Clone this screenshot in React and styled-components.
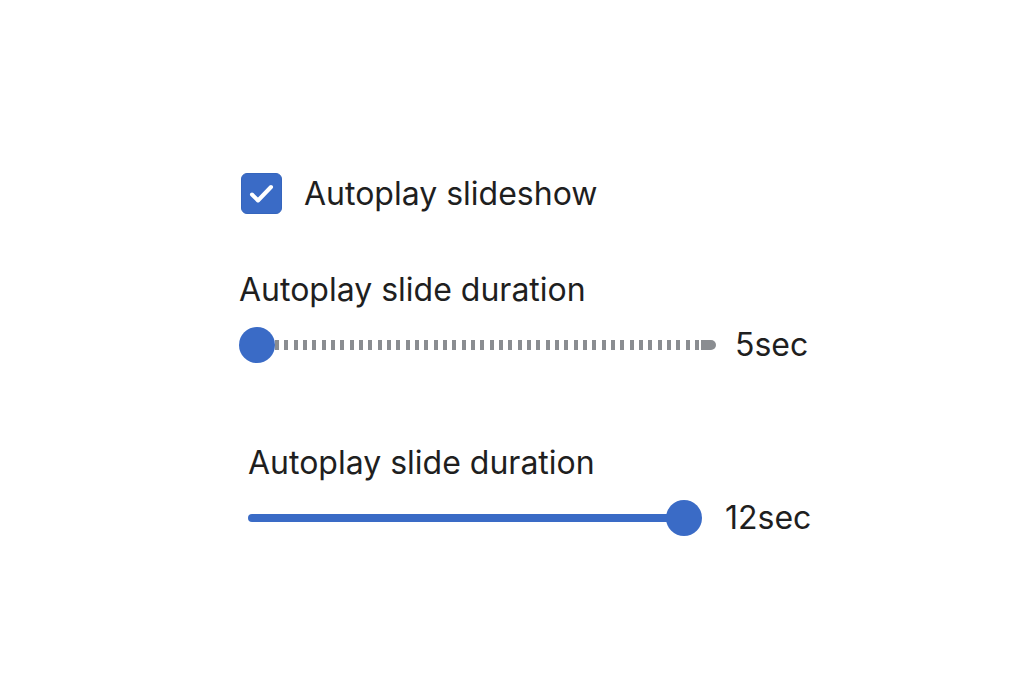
import React from "react"
import styled, { createGlobalStyle } from "styled-components"

const GlobalStyle = createGlobalStyle`
    html, body {
        margin: 0;
        padding: 0;
        background: #ffffff;
    }
    body {
        font-family: Inter, "Noto Sans", "Liberation Sans", sans-serif;
        color: #1f1f1f;
        -webkit-font-smoothing: antialiased;
    }
`

const ACCENT = "#3a6bc6"

const Page = styled.div`
    width: 1030px;
    height: 687px;
    box-sizing: border-box;
    padding: 173px 0 0 239px;
    display: flex;
    flex-direction: column;
`

const CheckRow = styled.label`
    display: flex;
    align-items: center;
    gap: 22px;
    height: 41px;
    margin-left: 2px;
    font-size: 32px;
    cursor: pointer;
`

const Box = styled.span`
    width: 41px;
    height: 41px;
    box-sizing: border-box;
    border-radius: 6px;
    background: ${p => (p.$checked ? ACCENT : "#fff")};
    border: 1px solid ${p => (p.$checked ? "#3565bd" : "#8a8d91")};
    display: flex;
    align-items: center;
    justify-content: center;
    position: relative;
    & > svg {
        position: absolute;
        left: -1px;
        top: -1px;
    }
`

const Group = styled.div`
    display: flex;
    flex-direction: column;
    margin-top: ${p => p.$top}px;
    padding-left: ${p => p.$indent || 0}px;
`

const Label = styled.div`
    font-size: 32px;
    line-height: 36px;
    height: 36px;
`

const SliderRow = styled.div`
    display: flex;
    align-items: center;
    height: 36px;
    margin-top: 19px;
    gap: ${p => p.$gap}px;
`

const Rail = styled.div`
    position: relative;
    width: ${p => p.$width}px;
    height: 36px;
`

const DashedTrack = styled.div`
    position: absolute;
    left: 36px;
    right: 15px;
    top: 13px;
    height: 10px;
    background: repeating-linear-gradient(
        to right,
        #8a8d91 0 4px,
        transparent 4px 9.33px
    );
    &::after {
        content: "";
        position: absolute;
        left: 100%;
        top: 0;
        width: 15px;
        height: 10px;
        background: #8a8d91;
        border-radius: 0 5px 5px 0;
    }
`

const FilledTrack = styled.div`
    position: absolute;
    left: 0;
    top: 14px;
    height: 8px;
    border-radius: 4px;
    background: ${ACCENT};
`

const Thumb = styled.div`
    position: absolute;
    top: 0;
    width: 36px;
    height: 36px;
    border-radius: 50%;
    background: ${ACCENT};
`

const Value = styled.span`
    font-size: 32px;
    line-height: 36px;
`

const Check = () => (
    <svg width="41" height="41" viewBox="0 0 41 41" fill="none">
        <path d="M11 21.5l6 6L30 14" stroke="#fff" strokeWidth="4" strokeLinecap="round" strokeLinejoin="round" />
    </svg>
)

const Slider = ({ value, min, max, width, dashed }) => {
    const span = width - 36
    const x = ((value - min) / (max - min)) * span
    return (
        <Rail $width={width}>
            {dashed ? <DashedTrack /> : <FilledTrack style={{ width: x + 18 }} />}
            <Thumb style={{ left: x }} />
        </Rail>
    )
}

const App = () => {
    const [autoplay, setAutoplay] = React.useState(true)

    return (
        <>
            <GlobalStyle />
            <Page>
                <CheckRow onClick={() => setAutoplay(!autoplay)}>
                    <Box $checked={autoplay}>{autoplay && <Check />}</Box>
                    Autoplay slideshow
                </CheckRow>

                <Group $top={58}>
                    <Label>Autoplay slide duration</Label>
                    <SliderRow $gap={19}>
                        <Slider value={5} min={5} max={12} width={477} dashed />
                        <Value>5sec</Value>
                    </SliderRow>
                </Group>

                <Group $top={82} $indent={9}>
                    <Label>Autoplay slide duration</Label>
                    <SliderRow $gap={23}>
                        <Slider value={12} min={5} max={12} width={454} />
                        <Value>12sec</Value>
                    </SliderRow>
                </Group>
            </Page>
        </>
    )
}

export default App
